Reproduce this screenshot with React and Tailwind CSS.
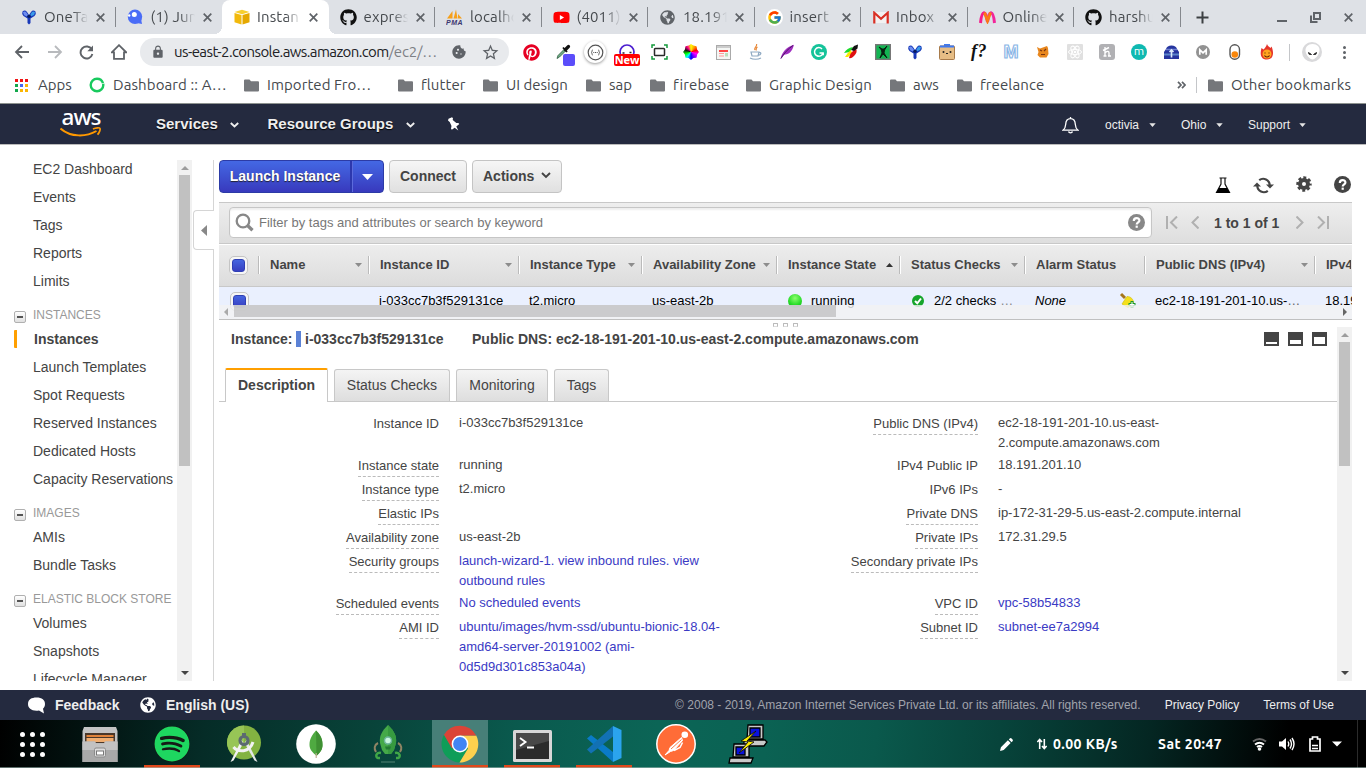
import React from 'react';
import { FaPinterest, FaSpotify, FaGithub, FaGlobeAmericas, FaYoutube } from 'react-icons/fa';
import { FcGoogle } from 'react-icons/fc';
import { MdCookie, MdStarOutline, MdLock } from 'react-icons/md';

const UI = "font-['Ubuntu','Noto_Sans',sans-serif]";

/* ---------- small drawings ---------- */
const X = () => (
  <svg width="9" height="9" viewBox="0 0 9 9" stroke="#5f6368" strokeWidth="1.7"><path d="M.7.7l7.6 7.6M8.3.7L.7 8.3" /></svg>
);
const Funnel = ({ size = 16 }) => (
  <svg width={size} height={size} viewBox="0 0 16 16">
    <path d="M1.500 2.500Q4 .5 6 3l2 3 2-3q2-2.500 4.500-.5 1 2-1 4.500L9.500 9.500V14L8 15.500 6.500 14V9.500L2.500 7Q.5 4.500 1.500 2.500z" fill="#1838b8" />
    <path d="M2 3.200q2-1.500 3.500.5L7 6 5.500 7.500 3 6z" fill="#6e8df0" /><path d="M14 3.200q-2-1.500-3.500.5L9.300 6l1 1.300L13 6z" fill="#3a9be8" />
    <circle cx="8" cy="7.300" r="1.600" fill="#061a5e" />
  </svg>
);
const Blob = () => (
  <svg width="16" height="16" viewBox="0 0 16 16"><circle cx="8" cy="7.800" r="7.200" fill="#4a6cf7" /><path d="M10 14l5 1-1-5z" fill="#4a6cf7" /><circle cx="7.300" cy="5.500" r="2.500" fill="#fff" /><circle cx="2.200" cy="6.500" r="1.200" fill="#fff" /></svg>
);
const Cube = () => (
  <svg width="16" height="16" viewBox="0 0 16 16"><path d="M.5 3L8 .8 15.500 3 8 5.200z" fill="#f7cf2e" /><path d="M.5 4l7 2v9.500l-7-2.300z" fill="#f2b90c" /><path d="M15.500 4l-7 2v9.500l7-2.300z" fill="#e5a800" /></svg>
);
const Pma = () => (
  <svg width="17" height="16" viewBox="0 0 17 16"><path d="M1 9.500L6.500 2v7.500zM7.500 9.500L10 .5l1.500 9zM12 9.500V5l4 4.500z" fill="#f6a01a" /><text x="0" y="15.500" fontSize="7" fontWeight="bold" fontStyle="italic" fontFamily="Liberation Sans" fill="#3b3670" textLength="16.500">PMA</text></svg>
);
const Gmail = () => (
  <svg width="16" height="13" viewBox="0 0 16 13"><rect x="1" y="1" width="14" height="11" fill="#f2f2f2" /><path d="M1.300 12.500V1.800L8 7.800l6.700-6v10.700" fill="none" stroke="#d93025" strokeWidth="2.200" /></svg>
);
const Myntra = () => (
  <svg width="17" height="13" viewBox="0 0 17 13"><path d="M1.500 12C2 6.500 3 2 5 1.700 7 2 7.500 6 8.500 11" fill="none" stroke="#f41c8b" strokeWidth="3" /><path d="M8.500 11C9.500 6 10 2 12 1.700c2 .3 3 4.800 3.500 10.300" fill="none" stroke="#f2259a" strokeWidth="3" /><path d="M5.500 1.500l3 8.500 3-8.500" fill="none" stroke="#fb7a14" strokeWidth="2.800" /></svg>
);
const tabs = [
  ['OneTa', <Funnel />], ['(1) Jun', <Blob />], ['Instan', <Cube />], ['expres', <FaGithub size={17} color="#111" />],
  ['localho', <Pma />], ['(4011) ', <FaYoutube size={17} color="#f00" className="bg-[linear-gradient(#fff,#fff)] bg-[length:8px_8px] bg-center bg-no-repeat" />], ['18.191', <FaGlobeAmericas size={15} color="#5f6368" />],
  ['insert ', <div className="rounded-full bg-white p-px"><FcGoogle size={15} /></div>], ['Inbox ', <Gmail />], ['Online', <Myntra />], ['harshu', <FaGithub size={17} color="#111" />],
];

function TabStrip() {
  return (
    <div className={'flex h-[34px] shrink-0 bg-[#dee1e6] pl-[9px] text-[15px] text-[#45494d] ' + UI}>
      {tabs.map(([t, icon], i) => (
        <div key={i} className={'relative flex w-[106.5px] shrink-0 items-center pl-[11px] ' + (i === 2 ? 'rounded-t-lg bg-white' : '')}>
          <div className="flex w-[17px] shrink-0 justify-center">{icon}</div>
          <div className="ml-[7px] w-[44px] overflow-hidden whitespace-pre tracking-[0.15px] [mask-image:linear-gradient(to_right,#000_65%,transparent)]">{t}</div>
          <div className="ml-[8px]"><X /></div>
          {i === 2 && <><div className="absolute -left-2 bottom-0 size-2 bg-[radial-gradient(circle_at_0_0,transparent_8px,#fff_8px)]" /><div className="absolute -right-2 bottom-0 size-2 bg-[radial-gradient(circle_at_100%_0,transparent_8px,#fff_8px)]" /></>}
          {i !== 2 && i !== 1 && <div className="absolute right-0 top-[7px] h-[20px] w-px bg-[#85888d]" />}
        </div>
      ))}
      <div className="ml-[15px] flex items-center"><svg width="13" height="13" viewBox="0 0 13 13" stroke="#3c4043" strokeWidth="2"><path d="M6.500.5v12M.5 6.500h12" /></svg></div>
      <div className="ml-auto flex items-center gap-[23px] pr-[13px]">
        <div className="mt-[7px] h-[2px] w-[10px] bg-[#5f6368]" />
        <svg width="11" height="11" viewBox="0 0 11 11" fill="none" stroke="#5f6368" strokeWidth="2"><path d="M4 1h6v6H4zM1 3.500V10h6.500" /></svg>
        <X />
      </div>
    </div>
  );
}

const exts = [
  <FaPinterest size={17} color="#e60023" />,
  <div className="relative"><svg width="16" height="16" viewBox="0 0 16 16"><path d="M2 14.500L3 11.500l6-6 1.500 1.500-6 6z" fill="#6fae86" stroke="#2d5a40" strokeWidth=".8" /><path d="M8 3.500l4 4.500" stroke="#111" strokeWidth="1.800" /><path d="M10.500 5.500L13.500 2.500" stroke="#111" strokeWidth="3.200" strokeLinecap="round" /></svg><div className="absolute left-[8px] top-[10px] size-[12px] rounded-[2px] bg-[#5b4dfa]" /></div>,
  <div className="flex size-[22px] items-center justify-center rounded-full bg-white shadow-[0_1px_3px_rgba(0,0,0,.4)]"><svg width="17" height="17" viewBox="0 0 17 17" fill="none" stroke="#555"><circle cx="8.500" cy="8.500" r="7.300" strokeWidth="1.200" /><path d="M5.800 5.800c-1.300 0-.3 2.700-1.500 2.700 1.200 0 .2 2.700 1.500 2.700M11.200 5.800c1.300 0 .3 2.700 1.500 2.700-1.200 0-.2 2.700-1.500 2.700" strokeWidth=".9" /><path d="M6.300 8.500h4.500" strokeDasharray="1 .7" /></svg></div>,
  <div className="relative"><svg width="16" height="16" viewBox="0 0 16 16" fill="none" stroke="#4c1fd0" strokeWidth="1.700"><circle cx="8" cy="8" r="7" /><path d="M3.500 9h2M10.500 8.500h2" stroke="#223" /></svg><div className="absolute -left-[5px] top-[10px] h-[12px] w-[26px] rounded-[2px] bg-[#f00] text-center font-['Noto_Sans'] text-[11px] font-bold leading-[12px] text-white">New</div></div>,
  <svg width="17" height="16" viewBox="0 0 17 16" fill="none"><path d="M1 4V1h3M13 1h3v3M16 12v3h-3M4 15H1v-3" stroke="#159a3c" strokeWidth="1.500" /><rect x="3.500" y="4.500" width="10" height="7" rx=".8" stroke="#2a2a2a" strokeWidth="1.500" /></svg>,
  <div className="size-[16px] rounded-full bg-[conic-gradient(#ff0,#f90,#f00,#f0f,#80f,#00f,#0ff,#0f0,#111,#f08,#ff0)] [clip-path:polygon(50%_0,65%_10%,85%_14%,88%_35%,100%_50%,88%_65%,85%_86%,65%_88%,50%_100%,35%_88%,15%_86%,12%_65%,0_50%,12%_35%,15%_14%,35%_10%)]" />,
  <svg width="15" height="15" viewBox="0 0 15 15"><rect x=".5" y=".5" width="14" height="14" fill="#f4f6f4" stroke="#aaa" /><rect x="1" y="1" width="13" height="2" fill="#ccc" /><path d="M3 6h9" stroke="#f44" strokeWidth="2" /><path d="M3 8.500h5M3 11h5" stroke="#f99" /><rect x="9" y="8" width="3" height="3.500" fill="#bdb" /></svg>,
  <svg width="15" height="16" viewBox="0 0 15 16" fill="none"><path d="M8.500 0c1 3-3 3.500-1.500 6M9.500 3C7.500 4 8.500 5 8 6.500" stroke="#e8893a" strokeWidth="1.200" /><path d="M3 8h8l-1 4H4zM11 8.500c3-.5 2 3-1 2.500M2 14c3 1.500 8 1.500 11 0" stroke="#8fa9c2" strokeWidth="1.200" /></svg>,
  <svg width="16" height="16" viewBox="0 0 16 16"><path d="M1.500 14.500C3 9 7 3 15 .8c-1 3-2 7-6 9-2 .8-3.500.6-5 2.200L1.500 15z" fill="#a02ec0" /><path d="M2 14.500C5 9 9 5 14 1.500" stroke="#4d1466" fill="none" /></svg>,
  <svg width="16" height="16" viewBox="0 0 16 16"><circle cx="8" cy="8" r="8" fill="#15c39a" /><path d="M11 5A4.300 4.300 0 1 0 12 9H8.500M12.200 9v2.300" stroke="#fff" strokeWidth="1.500" fill="none" /></svg>,
  <svg width="16" height="16" viewBox="0 0 16 16"><path d="M1 9Q4 4 10 3L7 8z" fill="#1adb2c" /><path d="M2 13Q4 9 8 6l1 3-4 4z" fill="#fae800" /><path d="M6 14Q7 8 13 5q2 3-2 7-3 3-5 2z" fill="#e01010" /><path d="M8 6L11 2l4-1.500-.5 4L11 7z" fill="#111" /></svg>,
  <svg width="16" height="16" viewBox="0 0 16 16"><rect x=".7" y=".7" width="14.600" height="14.600" fill="#12b552" stroke="#777" strokeWidth="1.400" /><path d="M5 14l2-5-.5-3L4 3l3 2h2l3-3-2.500 4L9 9l3 5-4-4z" fill="#072012" stroke="#072012" /></svg>,
  <Funnel size={16} />,
  <svg width="16" height="16" viewBox="0 0 16 16"><rect x="5" width="6" height="3" fill="#3d79f2" /><rect x=".5" y="2" width="15" height="13.500" rx="1" fill="#e6bd85" stroke="#a87b4b" /><rect x="1" y="1.500" width="14" height="2" fill="#3d79f2" /><circle cx="4.500" cy="8" r="1" fill="#222" /><circle cx="11.500" cy="8" r="1" fill="#222" /><path d="M7 9.500h2" stroke="#222" /></svg>,
  <div className="pb-[2px] font-['Liberation_Serif'] text-[18px] font-bold italic leading-none tracking-[0.5px] text-[#111]">f?</div>,
  <div className="font-['Liberation_Sans'] text-[18px] font-bold leading-none text-white [-webkit-text-stroke:1.200px_#8ab6e6]">M</div>,
  <svg width="14" height="14" viewBox="0 0 14 14"><path d="M1 2l3 1.500L11 1l1 2 .5 6-2 3.500H4L1.500 10l1-3z" fill="#e8871e" /><path d="M4 5l2 1M8 6l2-2M5 9.500h4" stroke="#7a3510" strokeWidth="1.200" /></svg>,
  <svg width="16" height="16" viewBox="0 0 16 16" fill="none"><rect width="16" height="16" rx="1" fill="#e0e0e0" /><g stroke="#fff"><ellipse cx="8" cy="8" rx="6.500" ry="2.600" /><ellipse cx="8" cy="8" rx="6.500" ry="2.600" transform="rotate(60 8 8)" /><ellipse cx="8" cy="8" rx="6.500" ry="2.600" transform="rotate(120 8 8)" /></g><circle cx="8" cy="8" r="1.300" fill="#fff" /></svg>,
  <svg width="16" height="16" viewBox="0 0 16 16" fill="none"><rect width="16" height="16" rx="3" fill="#b1b1b4" /><path d="M6 3v9M4.500 12h3M4 6.500l6-3M6.500 8.500c2-2 3.500-1 3.500.5v3M9 12h3" stroke="#fff" strokeWidth="1.400" /></svg>,
  <div className="flex size-4 items-center justify-center rounded-full bg-[#0fb9b1] pb-[2px] text-[12px] leading-none text-white">m</div>,
  <svg width="17" height="15" viewBox="0 0 17 15"><path d="M3 4q1-3.500 5.500-3.500T14 4l2 3v7H1V7z" fill="#25349e" /><path d="M1 8.500h15v2H1z" fill="#5b84c8" /><path d="M3 4.500h11" stroke="#6f7fd0" strokeWidth="1.500" /><path d="M8.500 4.500v8M6.500 7l2-2 2 2" stroke="#dceafa" strokeWidth="1.600" fill="none" /></svg>,
  <svg width="14" height="14" viewBox="0 0 14 14"><circle cx="7" cy="7" r="7" fill="#929292" /><path d="M3.800 9.800V4.800L7 7.800l3.200-3v5" stroke="#fff" strokeWidth="1.700" fill="none" /></svg>,
  <svg width="12" height="16" viewBox="0 0 12 16"><rect x="1" y=".8" width="9.500" height="14.400" rx="4.700" fill="#fff" stroke="#555" strokeWidth="1.400" /><circle cx="5.800" cy="10.500" r="3.300" fill="#f8860b" /></svg>,
  <svg width="14" height="16" viewBox="0 0 14 16"><path d="M7 0c.5 2 2 2.500 3.500 4l1-1.500C14 8 14 15.500 7 15.500S0 9 1.500 4l2 1.500C5 4 6 3 7 0z" fill="#e6352b" /><circle cx="7" cy="10" r="4.500" fill="#ffa51f" /><path d="M5 8.500v1M9 8.500v1M4.500 11.500c1 2 4 2 5 0" stroke="#5b1a08" strokeWidth="1.100" fill="none" /></svg>,
];

function Toolbar() {
  return (
    <div className={'flex h-[36px] shrink-0 items-center bg-white pl-[14px] ' + UI}>
      <div className="flex w-[126px] items-center gap-[16.5px]">
        <svg width="16" height="14" viewBox="0 0 16 14" fill="none" stroke="#5f6368" strokeWidth="1.800"><path d="M15 7H2M8 1L2 7l6 6" /></svg>
        <svg width="16" height="14" viewBox="0 0 16 14" fill="none" stroke="#b8babd" strokeWidth="1.800"><path d="M1 7h13M8 1l6 6-6 6" /></svg>
        <svg width="15" height="15" viewBox="0 0 15 15" fill="none" stroke="#5f6368" strokeWidth="1.900"><path d="M12.800 4.500A6 6 0 1 0 13.400 9" /><path d="M14 .5v5.700H8.300z" fill="#5f6368" stroke="none" /></svg>
        <svg width="16" height="16" viewBox="0 0 16 16" fill="none" stroke="#5f6368" strokeWidth="1.800"><path d="M.8 8.300L8 1.200l7.200 7.100H13v6.600H3V8.300z" /></svg>
      </div>
      <div className="flex h-[28px] w-[369px] items-center rounded-full bg-[#e8eaed] pl-[11px]">
        <MdLock size={14} color="#5f6368" />
        <div className="ml-[9px] w-[265px] whitespace-nowrap text-[15px] tracking-[-0.59px] text-[#202124]">us-east-2.console.aws.amazon.com<span className="tracking-[-0.2px] text-[#7d8085]">/ec2/…</span></div>
        <MdCookie className="ml-[12px]" size={16} color="#5f6368" />
        <MdStarOutline className="ml-[14px]" size={19} color="#5f6368" />
      </div>
      <div className="ml-[6px] flex">
        {exts.map((e, i) => <div key={i} className="flex h-[28px] w-[32px] items-center justify-center">{e}</div>)}
      </div>
      <div className="ml-[6px] h-[17px] w-px bg-[#c4c6c9]" />
      <div className="ml-[12px] flex size-[20px] items-center justify-center rounded-full bg-[#d9d9db]"><svg width="15" height="16" viewBox="0 0 15 16"><path d="M7.500 0C12 0 15 3 14.500 7S10 15.500 7.500 15.500.8 11 .5 7 3 0 7.500 0z" fill="#fff" /><path d="M3.500 8.500l3 2-2.500-.3zM11.500 8.500l-3 2 2.500-.3z" fill="#222" stroke="#222" strokeWidth=".9" /></svg></div>
      <div className="ml-[21px] flex flex-col gap-[2px]"><i className="size-[3px] rounded-full bg-[#5f6368]" /><i className="size-[3px] rounded-full bg-[#5f6368]" /><i className="size-[3px] rounded-full bg-[#5f6368]" /></div>
    </div>
  );
}

const Folder = () => (
  <svg width="15" height="13" viewBox="0 0 15 13"><path d="M0 1.500Q0 .5 1 .5h4.500L7 2.300h7q1 0 1 1V11.500q0 1-1 1H1q-1 0-1-1z" fill="#75777b" /></svg>
);
const AppsGrid = () => {
  const c = ['#f01414', '#f01414', '#f01414', '#12a84c', '#4668f0', '#fbb604', '#12a84c', '#fbb604', '#fbb604'];
  return <svg width="13" height="13" viewBox="0 0 13 13">{c.map((f, i) => <rect key={i} x={(i % 3) * 5} y={Math.floor(i / 3) * 5} width="3" height="3" fill={f} />)}</svg>;
};
function Bookmarks() {
  const items = [
    ['Apps', <AppsGrid />, 'w-[74px]', 'pl-[23px]'],
    ['Dashboard :: A…', <svg width="16" height="16" viewBox="0 0 16 16"><circle cx="8" cy="8" r="6.300" fill="none" stroke="#18ca5e" strokeWidth="2.400" strokeDasharray="36.500 .8 1.500 .8" /></svg>, 'w-[155px]', 'pl-[24px] tracking-[0.1px]'],
    ['Imported Fro…', <Folder />, 'w-[154px]', 'pl-[23px] tracking-[0.08px]'],
    ['flutter', <Folder />, 'w-[85px]', 'pl-[23px] tracking-[0.1px]'],
    ['UI design', <Folder />, 'w-[103px]', 'pl-[23px]'],
    ['sap', <Folder />, 'w-[64px]', 'pl-[23px]'],
    ['firebase', <Folder />, 'w-[96px]', 'pl-[23px] tracking-[0.15px]'],
    ['Graphic Design', <Folder />, 'w-[144px]', 'pl-[23px] tracking-[0.15px]'],
    ['aws', <Folder />, 'w-[67px]', 'pl-[23px]'],
    ['freelance', <Folder />, 'w-[130px]', 'pl-[23px] tracking-[0.1px]'],
  ];
  return (
    <div className={'flex h-[33px] shrink-0 items-center bg-white pb-[3px] pl-[15px] text-[15px] text-[#45494d] ' + UI}>
      {items.map(([t, icon, w, p], i) => (
        <div key={i} className={'relative flex shrink-0 items-center whitespace-nowrap ' + w + ' ' + p}>
          <div className="absolute left-0 top-0 flex h-full items-center">{icon}</div><span className="pt-px">{t}</span>
        </div>
      ))}
      <div className="ml-auto flex items-center pr-[14px]">
        <svg width="9" height="8" viewBox="0 0 9 8" fill="none" stroke="#5f6368" strokeWidth="1.700"><path d="M1 .8L4 4 1 7.200M5 .8L8 4 5 7.200" /></svg>
        <div className="ml-[10px] mr-[11px] h-[16px] w-px bg-[#c4c6c9]" /><Folder />
        <div className="ml-[8px] w-[121px] whitespace-nowrap pt-px tracking-[0.15px]">Other bookmarks</div>
      </div>
    </div>
  );
}

const Chev = () => <svg className="mt-[2px]" width="9" height="6" viewBox="0 0 9 6" fill="none" stroke="#eee" strokeWidth="1.900"><path d="M.8 1l3.700 3.500L8.200 1" /></svg>;
const Tri = () => <svg width="7" height="4" viewBox="0 0 8 5"><path d="M0 .3h8L4 5z" fill="#e6e6e6" /></svg>;

function AwsHeader() {
  return (
    <div className="flex h-[41px] shrink-0 items-center border-t border-[#8d928f] bg-[#242a3f] text-[#eee]">
      <div className="ml-[60px] flex h-full w-[42px] flex-col items-center">
        <div className="h-[24px] pt-[1px] font-['Noto_Sans',sans-serif] text-[22.500px] font-medium leading-[24px] tracking-[-1px] text-white">aws</div>
        <svg className="mt-[-2px]" width="42" height="12" viewBox="0 0 42 12" fill="none"><path d="M.5 2.500C11 11.500 26 11 36.500 5" stroke="#f90" strokeWidth="2" /><path d="M33 3c3-1.500 6.500-1.500 7-.6s-.5 4.300-2.500 6.300" stroke="#f90" strokeWidth="1.700" /></svg>
      </div>
      <div className="ml-[54px] flex w-[111.5px] items-center text-[15px] font-bold [text-shadow:0_1px_1px_#000]"><span className="w-[74px]">Services</span><Chev /></div>
      <div className="flex w-[181px] items-center text-[15px] font-bold [text-shadow:0_1px_1px_#000]"><span className="w-[138px]">Resource Groups</span><Chev /></div>
      <svg className="-ml-[2px]" width="13" height="14" viewBox="0 0 13 14"><path d="M1.500 1.800L5 .3l1 1-.3 1.800 3.600 3 2-.2 1 1-3 2.600 2 4-3.600-2.800L4.800 12.800 4 11.500l.5-2.500L2.700 5 1 3.500z" fill="#fff" /></svg>
      <div className="ml-auto flex items-center pt-px text-[12px]">
        <svg width="17" height="18" viewBox="0 0 17 18" fill="none" stroke="#fff" strokeWidth="1.300"><path d="M8.500 1v1.500M1 14.200c2.500-1.700 2.500-3 2.700-6C3.900 4.500 5.800 2.700 8.500 2.700s4.600 1.800 4.800 5.500c.2 3 .2 4.300 2.700 6zM6.500 15.500c.5 1.700 3.500 1.700 4 0" /></svg>
        <span className="ml-[26px] w-[44px]">octivia</span><Tri />
        <span className="ml-[25px] w-[35px]">Ohio</span><Tri />
        <span className="ml-[25px] w-[51px]">Support</span><Tri />
        <div className="w-[60px]" />
      </div>
    </div>
  );
}

function VScroll({ thumb }) {
  return (
    <div className="flex w-[15px] shrink-0 flex-col items-center bg-[#f1f1f1]">
      <div className="flex h-[15px] items-center"><svg width="8" height="4" viewBox="0 0 8 4"><path d="M0 4h8L4 0z" fill="#9d9d9d" /></svg></div>
      <div className={'w-[11px] bg-[#c1c1c1] ' + thumb} />
      <div className="mt-auto flex h-[16px] items-center"><svg width="8" height="4" viewBox="0 0 8 4"><path d="M0 0h8L4 4z" fill="#454545" /></svg></div>
    </div>
  );
}

const nav = ['EC2 Dashboard', 'Events', 'Tags', 'Reports', 'Limits', '#INSTANCES', 'Instances', 'Launch Templates', 'Spot Requests', 'Reserved Instances', 'Dedicated Hosts', 'Capacity Reservations', '#IMAGES', 'AMIs', 'Bundle Tasks', '#ELASTIC BLOCK STORE', 'Volumes', 'Snapshots', 'Lifecycle Manager'];
function Sidebar() {
  return (
    <div className="mt-[15px] flex h-[521px] w-[192px] shrink-0 overflow-hidden">
      <div className="-mt-[5px] w-[177px] shrink-0 text-[14px] text-[#444]">
        {nav.map((n) => n[0] === '#' ? (
          <div key={n} className="mt-[10px] flex h-[20px] items-center pl-[14px] text-[12px] text-[#999]">
            <div className="mr-[7px] mt-[4px] flex size-[12px] items-center justify-center rounded-[2px] border border-[#b0b0b0] bg-linear-to-b from-white to-[#e0e0e0]"><div className="h-[2px] w-[6px] bg-[#555]" /></div>
            <span className="whitespace-nowrap">{n.slice(1)}</span>
          </div>
        ) : n === 'Instances' ? (
          <div key={n} className="flex h-[28px] items-center pl-[14px] font-bold"><div className="mr-[17px] h-[18px] w-[3px] rounded-l-[1px] bg-[#ff9f00]" />{n}</div>
        ) : (
          <div key={n} className="flex h-[28px] items-center whitespace-nowrap pl-[33px]">{n}</div>
        ))}
      </div>
      <VScroll thumb="h-[291px]" />
    </div>
  );
}

const Down = ({ up }) => up
  ? <svg width="7" height="4" viewBox="0 0 7 4"><path d="M0 4h7L3.500 0z" fill="#333" /></svg>
  : <svg width="7" height="4" viewBox="0 0 7 4"><path d="M0 0h7L3.500 4z" fill="#8c8c8c" /></svg>;
const Check = () => <div className="flex size-[19px] items-center justify-center rounded-[5px] border border-[#c4c4c4] bg-[#f6f6f6]"><div className="size-[13px] rounded-[3px] border border-[#2f3fb5] bg-linear-to-b from-[#4565e0] to-[#383fc0]" /></div>;
const Help = ({ c }) => <svg width="17" height="17" viewBox="0 0 17 17"><circle cx="8.500" cy="8.500" r="8.500" fill={c} /><path d="M5.800 6.900c0-3.700 5.600-3.500 5.600-.4 0 2-2.700 1.900-2.700 4.100" stroke="#fff" strokeWidth="2.200" fill="none" /><rect x="7.600" y="11.600" width="2.200" height="2.200" fill="#fff" /></svg>;

const cols = [
  ['Name', 'w-[110px]', 'd', null],
  ['Instance ID', 'w-[150px]', 'd', 'i-033cc7b3f529131ce'],
  ['Instance Type', 'w-[123px]', 'd', 't2.micro'],
  ['Availability Zone', 'w-[135px]', 'd', 'us-east-2b'],
  ['Instance State', 'w-[123px]', 'u', <div className="flex items-center"><div className="ml-px mr-[9px] size-[14px] rounded-full bg-[radial-gradient(circle_at_50%_30%,#8dff6f,#29dd29_55%,#0aa81a)]" />running</div>],
  ['Status Checks', 'w-[125px]', 'd', <div className="flex items-center"><svg className="ml-[2px] mr-[10px]" width="12" height="12" viewBox="0 0 12 12"><circle cx="6" cy="6" r="6" fill="#16a52b" /><path d="M3 6l2.300 2.300L9 3.500" stroke="#fff" strokeWidth="2" fill="none" /></svg>2/2 checks <span className="ml-1 text-[#888]">…</span></div>],
  ['Alarm Status', 'w-[120px]', '', <div className="flex items-center justify-between"><i>None</i><svg className="mr-[8px]" width="18" height="18" viewBox="0 0 18 18"><path d="M2 2l4 4" stroke="#a5761c" strokeWidth="3" /><path d="M3 12L8 4.500c4 0 6.500 3 6.500 6.500L9 15.500z" fill="#f4e01c" stroke="#d8c41c" strokeWidth=".8" /><path d="M13 9v7M9.500 12.500h7" stroke="#17982e" strokeWidth="3" /><path d="M13 10v5M10.500 12.500h5" stroke="#fff" strokeWidth="1" /></svg></div>],
  ['Public DNS (IPv4)', 'w-[170px]', 'd', <>ec2-18-191-201-10.us-<span className="text-[#666]">…</span></>],
  ['IPv4 Public IP', 'w-[37px]', '', '18.191.201.10'],
];

function Details() {
  const L = ({ u, children }) => <div className="flex justify-end"><span className={'h-[22px] border-b leading-[21px] ' + (u ? 'border-dashed border-[#bbb]' : 'border-transparent')}>{children}</span></div>;
  const rows = [
    ['Instance ID', 0, 'i-033cc7b3f529131ce', 0, 'Public DNS (IPv4)', 1, 'ec2-18-191-201-10.us-east-\n2.compute.amazonaws.com', 0],
    ['Instance state', 1, 'running', 0, 'IPv4 Public IP', 0, '18.191.201.10', 0],
    ['Instance type', 1, 't2.micro', 0, 'IPv6 IPs', 0, '-', 0],
    ['Elastic IPs', 1, '', 0, 'Private DNS', 1, 'ip-172-31-29-5.us-east-2.compute.internal', 0],
    ['Availability zone', 1, 'us-east-2b', 0, 'Private IPs', 1, '172.31.29.5', 0],
    ['Security groups', 1, 'launch-wizard-1. view inbound rules. view\noutbound rules', 1, 'Secondary private IPs', 1, '', 0],
    ['Scheduled events', 1, 'No scheduled events', 1, 'VPC ID', 1, 'vpc-58b54833', 1],
    ['AMI ID', 1, 'ubuntu/images/hvm-ssd/ubuntu-bionic-18.04-\namd64-server-20191002 (ami-\n0d5d9d301c853a04a)', 1, 'Subnet ID', 1, 'subnet-ee7a2994', 1],
  ];
  return (
    <div className="mt-[11px] text-[13px] text-[#444]">
      {rows.map((r) => (
        <div key={r[0]} className="grid grid-cols-[220px_20px_299px_220px_20px_300px] pb-[2px]">
          <L u={r[1]}>{r[0]}</L><span />
          <div className={'whitespace-pre leading-[20px] ' + (r[3] ? 'text-[#3a3ac4]' : '')}>{r[2]}</div>
          <L u={r[5]}>{r[4]}</L><span />
          <div className={'whitespace-pre leading-[20px] ' + (r[7] ? 'text-[#3a3ac4]' : '')}>{r[6]}</div>
        </div>
      ))}
    </div>
  );
}

function Main() {
  const btn = 'flex h-[33px] items-center rounded-[4px] border border-[#c4c4c4] bg-linear-to-b from-[#f6f6f6] to-[#e0e0e0] font-bold text-[14px]';
  const tab = 'flex h-[32px] items-center justify-center rounded-t-[3px] border border-b-0 border-[#c8c8c8] bg-linear-to-b from-[#f4f4f4] to-[#dedede] text-[14px]';
  const pg = { fill: 'none', stroke: '#b0b0b0', strokeWidth: 2 };
  return (
    <div className="mt-[15px] flex h-[521px] w-[1133px] flex-col overflow-hidden text-[#444]">
      <div className="flex h-[42px] shrink-0">
        <div className="flex h-[33px] w-[165px] overflow-hidden rounded-[4px] border border-[#2c3ba6] bg-linear-to-b from-[#4468e4] to-[#3839bd] text-[14px] font-bold text-white">
          <div className="flex w-[132px] items-center justify-center border-r-2 border-[#2d38ad] [text-shadow:0_1px_1px_#223]">Launch Instance</div>
          <div className="flex flex-1 items-center justify-center border-l border-[#5c6bdc]"><svg className="-ml-[2px]" width="11" height="6" viewBox="0 0 11 6"><path d="M0 0h11L5.500 6z" fill="#fff" /></svg></div>
        </div>
        <div className={btn + ' ml-[5px] w-[78px] justify-center'}>Connect</div>
        <div className={btn + ' ml-[5px] w-[90px] pl-[10px]'}>Actions<svg className="-mt-[2px] ml-[7px]" width="10" height="7" viewBox="0 0 10 7" fill="none" stroke="#444" strokeWidth="1.900"><path d="M1 1l4 4 4-4" /></svg></div>
        <div className="ml-auto mt-[8px] flex h-[34px] items-center">
          <svg width="16" height="17" viewBox="0 0 16 17"><path d="M4.500 1h7M6 1v6L1.500 15.500h13L10 7V1" fill="none" stroke="#111" strokeWidth="1.200" /><path d="M4 11h8l3 5H1z" fill="#000" /></svg>
          <svg className="ml-[22px]" width="21" height="17" viewBox="0 0 21 17" fill="none" stroke="#444" strokeWidth="2.200"><path d="M6.200 3.200a6.500 6.500 0 0 1 10.500 5M14.800 13.800a6.500 6.500 0 0 1-10.500-5" /><path d="M13 7.500h8l-4 4zM0 9.500h8l-4-4z" fill="#444" stroke="none" /></svg>
          <svg className="-mt-[2px] ml-[22px]" width="16" height="16" viewBox="0 0 16 16" fill="none" stroke="#444"><circle cx="8" cy="8" r="4" strokeWidth="4" /><circle cx="8" cy="8" r="6.400" strokeWidth="2.600" strokeDasharray="2.900 2.127" strokeDashoffset="1.450" /></svg>
          <div className="-mt-px ml-[22px] mr-px"><Help c="#444" /></div>
        </div>
      </div>
      <div className="flex h-[42px] shrink-0 items-start border-y border-[#c8c8c8] bg-linear-to-b from-[#eee] to-[#dedede] pl-[10px] pt-[4px]">
        <div className="flex h-[31px] w-[923px] items-center rounded-[4px] border border-[#c6c6c6] bg-white pl-[5px] pr-[6px] text-[13px] text-[#777] shadow-[inset_0_2px_2px_#eee]">
          <svg width="19" height="19" viewBox="0 0 19 19" fill="none" stroke="#888"><circle cx="8" cy="8" r="6.300" strokeWidth="2.300" /><path d="M12.500 12.500l5 4.700" strokeWidth="3.300" /></svg>
          <span className="ml-[5px]">Filter by tags and attributes or search by keyword</span>
          <div className="ml-auto"><Help c="#888" /></div>
        </div>
        <div className="flex h-[31px] flex-1 items-center pl-[14px]">
          <svg width="12" height="13" viewBox="0 0 12 13" {...pg}><path d="M1 0v13M11 .5l-6 6 6 6" /></svg>
          <svg className="ml-[13px]" width="8" height="13" viewBox="0 0 8 13" {...pg}><path d="M7.500.5l-6 6 6 6" /></svg>
          <span className="ml-[15px] w-[82px] whitespace-nowrap pt-px text-[14px] font-bold">1 to 1 of 1</span>
          <svg width="8" height="13" viewBox="0 0 8 13" {...pg}><path d="M.5.500l6 6-6 6" /></svg>
          <svg className="ml-[13px]" width="12" height="13" viewBox="0 0 12 13" {...pg}><path d="M11 0v13M1 .5l6 6-6 6" /></svg>
        </div>
      </div>
      <div className="flex h-[43px] shrink-0 items-center border-b border-t border-b-[#c8c8c8] border-t-white bg-linear-to-b from-[#ededed] to-[#dcdcdc] pb-px text-[13px] font-bold">
        <div className="w-[39px] shrink-0 pl-[10px]"><Check /></div>
        {cols.map(([n, w, d]) => (
          <div key={n} className={'flex h-[18px] shrink-0 items-center overflow-hidden border-l border-[#bbb] shadow-[inset_1px_0_#fff] ' + w}>
            <span className="whitespace-nowrap pl-[11px]">{n}</span>
            {d && <div className="ml-auto mr-[6px]"><Down up={d === 'u'} /></div>}
          </div>
        ))}
      </div>
      <div className="relative h-[33px] shrink-0 overflow-hidden border-b border-[#c0c0c0] bg-[#eaf0fe] text-[13px] text-black">
        <div className="flex h-[27px] items-center">
          <div className="w-[40px] shrink-0 pl-[11px] pt-[2px]"><Check /></div>
          {cols.map(([n, w, , v]) => <div key={n} className={'shrink-0 overflow-hidden whitespace-nowrap pl-[10px] ' + w}>{v}</div>)}
        </div>
        <div className="absolute inset-x-0 bottom-0 flex h-[14px] items-center bg-[#f2f2f2]/80">
          <svg className="ml-[5px]" width="4" height="8" viewBox="0 0 4 8"><path d="M4 0v8L0 4z" fill="#aaa" /></svg>
          <div className="mb-[2px] ml-[6px] h-[12px] w-[602px] bg-[#c4c4c6]/85" />
          <svg className="ml-auto mr-[5px]" width="4" height="8" viewBox="0 0 4 8"><path d="M0 0v8l4-4z" fill="#666" /></svg>
        </div>
      </div>
      <div className="flex h-[7px] shrink-0 items-end justify-center gap-[5px]">
        {[0, 1, 2].map((i) => <div key={i} className="h-[4px] w-[5px] rounded-t-[1px] border border-[#bbb] border-b-[#ddd]" />)}
      </div>
      <div className="flex min-h-0 flex-1">
        <div className="w-[1118px] overflow-hidden">
          <div className="flex h-[24px] items-center pl-[12px] text-[14px] font-bold">
            <span className="w-[65px]">Instance:</span><div className="mr-[4px] h-[16px] w-[5px] bg-[#5b82d6]" /><span className="w-[167px]">i-033cc7b3f529131ce</span>Public DNS: ec2-18-191-201-10.us-east-2.compute.amazonaws.com
            <div className="ml-auto mr-[10px] flex gap-[9px]">
              <div className="h-[14px] w-[15px] border-2 border-t-[10px] border-[#444]" />
              <div className="h-[14px] w-[15px] border-2 border-t-[8px] border-[#444]" />
              <div className="h-[14px] w-[15px] border-2 border-t-[5px] border-[#444]" />
            </div>
          </div>
          <div className="mt-[17px] flex h-[34px] items-end border-b border-[#c8c8c8] pl-[6px]">
            <div className="-mb-px flex h-[34px] w-[103px] items-center justify-center rounded-t-[2px] border border-b-0 border-t-2 border-[#c8c8c8] border-t-[#ff9f00] bg-white pb-[2px] text-[14px] font-bold">Description</div>
            <div className={tab + ' ml-[6px] w-[116px]'}>Status Checks</div>
            <div className={tab + ' ml-[6px] w-[92px]'}>Monitoring</div>
            <div className={tab + ' ml-[6px] w-[55px]'}>Tags</div>
          </div>
          <Details />
        </div>
        <VScroll thumb="h-[124px]" />
      </div>
    </div>
  );
}

function Taskbar() {
  const slot = 'relative flex h-[48px] items-center justify-center ';
  const apps = [
    [<svg width="27" height="27" viewBox="0 0 27 27" fill="#fff">{[0, 1, 2].flatMap((r) => [0, 1, 2].map((c) => <circle key={r + '' + c} cx={3.500 + c * 10} cy={3.500 + r * 10} r="2.500" />))}</svg>, 0],
    [<svg width="36" height="37" viewBox="0 0 36 37"><path d="M2 1h32l1.500 4v31H.5V5z" fill="#c4c4c4" /><path d="M3 7h30v10H3z" fill="#4a382a" /><path d="M4.500 9h27v2h-27z" fill="#e0833a" /><path d="M4.500 12h27v4h-27z" fill="#efae72" /><path d="M.5 15.500H13l1 2h8l1-2h12.500V36H.5z" fill="#a9a9a9" /><path d="M.5 15.500H13l1 2h8l1-2h12.500V24H.5z" fill="#c2c2c2" /><rect x="12.500" y="22" width="11" height="9" rx="1.500" fill="#ddd" stroke="#8b8b8b" /><rect x="14.500" y="25" width="7" height="4" fill="#fff" stroke="#777" /></svg>, 0],
    [<div className="rounded-full bg-[#151b17]"><FaSpotify size={36} color="#1ed760" /></div>, 1],
    [<svg width="36" height="38" viewBox="0 0 36 38"><circle cx="18" cy="17.500" r="17" fill="#83b341" /><path d="M18 .5a17 17 0 0 0-12 29L18 17z" fill="#97c556" /><path d="M4.500 37l3-1.500L17.500 18 15.500 15z" fill="#f2f2f2" /><path d="M31.500 37l-3-1.500L18.500 18l2-3z" fill="#e4e8e8" /><path d="M7.500 22c4.500 5.500 16 6 19.500-5" stroke="#f2f2f2" strokeWidth="3" fill="none" /><circle cx="18" cy="15.500" r="4" fill="none" stroke="#5c6a70" strokeWidth="3.200" /><path d="M16 8h4v5h-4z" fill="#5c6a70" /></svg>, 0],
    [<svg width="40" height="40" viewBox="0 0 40 40"><circle cx="20" cy="20" r="19.800" fill="#fff" /><path d="M20 6.500c5 5 6.500 9 6.500 14.500 0 5-3 8-6 11-3-3-7-6-7-11 0-6 2.500-10 6.500-14.500z" fill="#4faa41" /><path d="M20 6.500c5 5 6.500 9 6.500 14.500 0 5-3 8-6 11z" fill="#3f9033" /><path d="M20.200 29v5" stroke="#c0ad96" strokeWidth="1.200" /></svg>, 0],
    [<svg width="30" height="40" viewBox="0 0 30 40"><path d="M5 19c-4 2-4 6-2 9M25 19c4 2 4 6 2 9" stroke="#8f8464" strokeWidth="2" fill="none" /><path d="M15 1c6 6 9 11 8 18l-2 7-3 4h-6l-3-4-2-7C6 12 9 7 15 1z" fill="#44a948" /><path d="M15 1c6 6 9 11 8 18l-2 7-3 4h-3z" fill="#379a40" /><circle cx="15" cy="16.500" r="3.500" fill="#c9f6df" stroke="#6cb59b" strokeWidth="1.500" /><path d="M12 22.500h6l-1 3h-4z" fill="#247a35" /><path d="M8 29c-5-1-6 4-3 5h2M22 29c5-1 6 4 3 5h-2" stroke="#40a747" strokeWidth="2.500" fill="none" /><path d="M8 38h14" stroke="#3a6f62" strokeWidth="1.500" /></svg>, 0],
    [<svg width="38" height="38" viewBox="0 0 38 38"><path d="M3 9.750A18.500 18.500 0 0 0 18.500 37.500L27 23.500l-8-4.500-8 4.500z" fill="#0f9d58" /><path d="M27 23.500L18.500 37.500A18.500 18.500 0 0 0 35.200 10.500H19z" fill="#fdd04e" /><path d="M3 9.800A18.500 18.500 0 0 1 35.200 10.500H19L11 23.500z" fill="#db4437" /><circle cx="19" cy="19" r="8.400" fill="#fff" /><circle cx="19" cy="19" r="6.900" fill="#4285f4" /></svg>, 2],
    [<svg className="mt-[3px]" width="39" height="32" viewBox="0 0 39 32"><rect width="39" height="32" rx="1.500" fill="#d7d7d7" /><rect x="3" y="3" width="33" height="26" fill="#2b2b2b" /><path d="M3 3h33v8L3 20z" fill="#484848" /><path d="M7 8l5.500 4L7 16M14 17.500h7" stroke="#fff" strokeWidth="1.900" fill="none" /></svg>, 1],
    [<svg width="36" height="36" viewBox="0 0 36 36"><path d="M27 36L35.500 32V4L27 0z" fill="#2ba4ee" /><path d="M1 12.500L5 9l22 17v10z" fill="#0a7bc8" /><path d="M27 0v10.500L5 27.500 1 23.500z" fill="#1271b4" /></svg>, 1],
    [<svg width="40" height="40" viewBox="0 0 40 40"><circle cx="20" cy="20" r="19.200" fill="#ff6c37" stroke="#fff" strokeWidth="1.500" /><circle cx="28.800" cy="10.800" r="3.300" fill="#fff" /><path d="M25.500 13.500L14 23.500l-1 3-4 4.500 5.500-3.500 3-1 9-10z" fill="#fff" stroke="#fff" /><path d="M15 25l10.500-9.500" stroke="#f3703b" strokeWidth=".9" /><path d="M18 26.500l6-3 2.500-5" stroke="#fff" strokeWidth="1.500" fill="none" /></svg>, 0],
    [<svg width="40" height="40" viewBox="0 0 40 40"><g stroke="#000" strokeWidth="1.300"><path d="M20 1h15v14H19zM16 16h21l2 2-3 4H16z" fill="#c9c9c9" /><path d="M22 4h10v9H22z" fill="#0a12dd" /><path d="M6 20h15v13H5zM2 34h23l-2 5H1z" fill="#c9c9c9" /><path d="M8 23h9v8H8z" fill="#0a12dd" /></g><path d="M28 7L13 17l7 1-9 11 15-11-7-1z" fill="#ffef00" stroke="#111" strokeWidth=".9" /></svg>, 0],
  ];
  return (
    <div className="relative flex h-[48px] shrink-0 bg-[linear-gradient(97deg,#000_0%,#020f0d_5%,#052c27_15%,#084339_27%,#0a5a4e_38%,#0b6556_48%,#0b6253_56%,#0a594c_64%,#07443b_73%,#042622_84%,#000_94%)] text-white">
      <div className="flex">
        {apps.map(([a, s], i) => (
          <div key={i} className={slot + (i ? 'w-[72px]' : 'w-[64px]')}>
            {s === 2 && <div className="absolute inset-x-[8px] inset-y-0 bg-[#477f78]" />}
            <div className="relative">{a}</div>
            {s > 0 && <div className="absolute inset-x-[8px] bottom-0 h-[3px] bg-[#e0481b]" />}
          </div>
        ))}
      </div>
      <div className={'ml-auto flex items-center text-[14px] font-bold ' + UI}>
        <svg width="13" height="13" viewBox="0 0 14 14"><path d="M0 14l1-4 7.500-7.500 3 3L4 13zM9.500 1.500l1-1q1-.8 2 0l1 1q.8 1 0 2l-1 1z" fill="#fff" /></svg>
        <svg className="ml-[24px]" width="10" height="12" viewBox="0 0 10 12" fill="none" stroke="#fff" strokeWidth="1.600"><path d="M2.700 11V1.500M.3 4l2.400-2.600L5 4M7.300 1v9.500M5 8l2.300 2.600L9.700 8" /></svg>
        <span className="ml-[6px] w-[105px] whitespace-nowrap tracking-[0.45px]">0.00 KB/s</span>
        <span className="w-[94px] whitespace-nowrap tracking-[0.45px]">Sat 20:47</span>
        <svg width="15" height="14" viewBox="0 0 15 14" fill="none" strokeWidth="2"><path d="M1 4.500q6.500-5 13 0" stroke="#666" /><path d="M3 7.500q4.500-3.500 9 0M5 10q2.500-2 5 0" stroke="#fff" /><circle cx="7.500" cy="12" r="1.800" fill="#fff" /></svg>
        <svg className="ml-[12px]" width="16" height="14" viewBox="0 0 16 14"><path d="M0 4.500h3L7 1v12L3 9.500H0z" fill="#fff" /><path d="M9 4.500q1.500 2.500 0 5M11 2.500q3 4.500 0 9M13 1q4 6 0 12" stroke="#fff" strokeWidth="1.400" fill="none" /></svg>
        <svg className="ml-[14px]" width="12" height="16" viewBox="0 0 12 16" fill="none" stroke="#fff" strokeWidth="1.700"><path d="M1 3h2.500V1h5v2H11v12H1zM3 9.500h6M3 12.500h6" /></svg>
        <svg className="ml-[11px]" width="10" height="6" viewBox="0 0 10 6"><path d="M0 .5h10L5 5.500z" fill="#fff" /></svg>
        <div className="ml-[15px] mr-[8px] h-[48px] w-px bg-[#2b2b2b]" />
      </div>
      <div className="absolute inset-x-0 bottom-0 h-px bg-[#9db8b2]/60" />
    </div>
  );
}

export default function App() {
  return (
    <div className="flex h-[768px] w-[1366px] flex-col overflow-hidden bg-white font-['Liberation_Sans',Arial,sans-serif]">
      <TabStrip />
      <Toolbar />
      <Bookmarks />
      <AwsHeader />
      <div className="flex h-[546px] shrink-0 border-t border-[#bbb]">
        <Sidebar />
        <div className="mt-[15px] flex h-[521px] w-[27px] shrink-0 flex-col">
          <div className="ml-[21px] h-[50px] border-l border-[#d5d5d5]" />
          <div className="ml-[1px] flex h-[40px] w-[21px] items-center justify-center rounded-l-[4px] border border-r-0 border-[#d5d5d5]"><svg width="6" height="11" viewBox="0 0 6 11"><path d="M6 0v11L0 5.500z" fill="#888" /></svg></div>
          <div className="ml-[21px] flex-1 border-l border-[#d5d5d5]" />
        </div>
        <Main />
      </div>
      <div className="flex h-[30px] shrink-0 items-center bg-[#242a3f] text-[14px] font-bold text-[#eee]">
        <svg className="ml-[28px] mr-[10px]" width="17" height="17" viewBox="0 0 17 17"><path d="M8.500 0.500C14 .5 17 3 17 7c0 2-.8 3.600-2 4.800l1 4.700-5-3C4 14.500 0 11.500 0 7S3.500.5 8.500.5z" fill="#fff" /></svg>
        <span className="w-[85px]">Feedback</span>
        <FaGlobeAmericas size={16} color="#fff" />
        <span className="ml-[10px]">English (US)</span>
        <div className="ml-auto flex pr-[32px] text-[12px] font-normal"><span className="mr-[24px] text-[#a0a3ab]">© 2008 - 2019, Amazon Internet Services Private Ltd. or its affiliates. All rights reserved.</span><span className="mr-[24px]">Privacy Policy</span><span>Terms of Use</span></div>
      </div>
      <Taskbar />
    </div>
  );
}
